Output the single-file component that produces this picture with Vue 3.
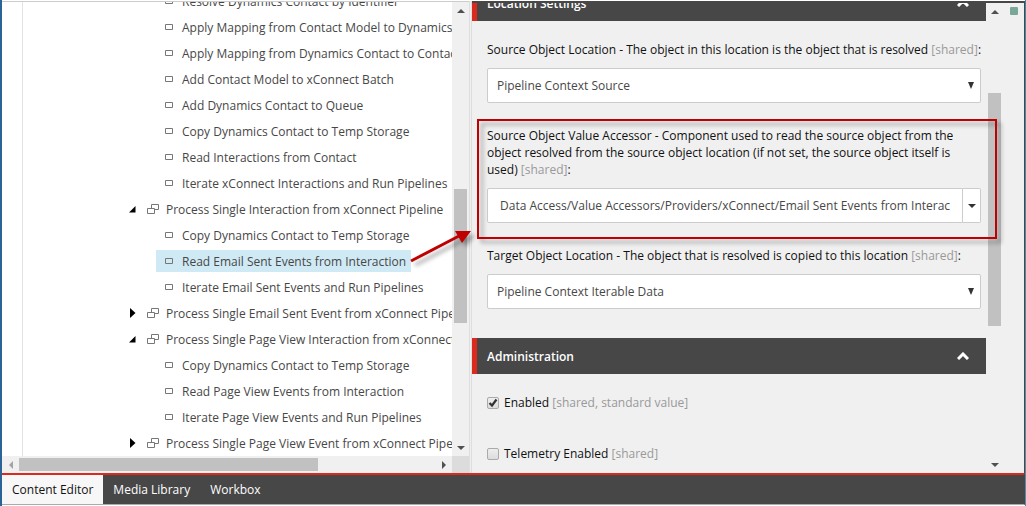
<script setup>
import { ref } from 'vue'

const rows = [
  { text: 'Resolve Dynamics Contact by Identifier', level: 2 },
  { text: 'Apply Mapping from Contact Model to Dynamics Contact', level: 2 },
  { text: 'Apply Mapping from Dynamics Contact to Contact Model', level: 2 },
  { text: 'Add Contact Model to xConnect Batch', level: 2 },
  { text: 'Add Dynamics Contact to Queue', level: 2 },
  { text: 'Copy Dynamics Contact to Temp Storage', level: 2 },
  { text: 'Read Interactions from Contact', level: 2 },
  { text: 'Iterate xConnect Interactions and Run Pipelines', level: 2 },
  { text: 'Process Single Interaction from xConnect Pipeline', level: 1, open: true },
  { text: 'Copy Dynamics Contact to Temp Storage', level: 2 },
  { text: 'Read Email Sent Events from Interaction', level: 2, selected: true },
  { text: 'Iterate Email Sent Events and Run Pipelines', level: 2 },
  { text: 'Process Single Email Sent Event from xConnect Pipeline', level: 1, open: false },
  { text: 'Process Single Page View Interaction from xConnect Pipeline', level: 1, open: true },
  { text: 'Copy Dynamics Contact to Temp Storage', level: 2 },
  { text: 'Read Page View Events from Interaction', level: 2 },
  { text: 'Iterate Page View Events and Run Pipelines', level: 2 },
  { text: 'Process Single Page View Event from xConnect Pipeline', level: 1, open: false },
]

const tabs = ['Content Editor', 'Media Library', 'Workbox']
const active = ref('Content Editor')
const accessor = ref('Data Access/Value Accessors/Providers/xConnect/Email Sent Events from Interaction')
const enabled = ref(true)
const telemetry = ref(false)

const treeScroll = [170, 134, 116]
const treeScrollX = [0, 299, 117]
const editorScroll = [73, 233, 130]
</script>

<template>
  <div class="window">
    <main class="main">
      <section class="tree-pane">
        <div class="tree-view">
          <ul class="tree">
            <li v-for="(row, i) in rows" :key="i" :class="['row', 'level-' + row.level]">
              <button v-if="row.level === 1" class="toggle" type="button" aria-label="Toggle">
                <svg width="8" height="10" viewBox="0 0 8 10">
                  <path v-if="row.open" d="M6.5 2V8.5H0z" fill="#000" />
                  <path v-else d="M1 0L6.5 5L1 10z" fill="#000" />
                </svg>
              </button>
              <a href="#" :class="['node', { selected: row.selected }]" @click.prevent>
                <svg v-if="row.level === 1" width="12" height="10" viewBox="0 0 12 10" fill="none" stroke="#777">
                  <path d="M.5 4.500h7v5h-7z M4.500 4.500v-4h7v5h-4" />
                </svg>
                <svg v-else width="8" height="6" viewBox="0 0 8 6" fill="none" stroke="#777">
                  <path d="M.5 .5h7v5h-7z" />
                </svg>
                <span>{{ row.text }}</span>
              </a>
            </li>
          </ul>
        </div>
        <div class="bar vertical" aria-hidden="true">
          <span class="cap"><svg width="8" height="4"><path d="M4 0L8 4H0z" fill="#505050" /></svg></span>
          <i :style="{ flexGrow: treeScroll[0] }"></i>
          <i class="thumb" :style="{ flexGrow: treeScroll[1] }"></i>
          <i :style="{ flexGrow: treeScroll[2] }"></i>
          <span class="cap"><svg width="8" height="4"><path d="M0 0H8L4 4z" fill="#505050" /></svg></span>
        </div>
        <div class="bar horizontal" aria-hidden="true">
          <span class="cap"><svg width="4" height="8"><path d="M4 0V8L0 4z" fill="#a3a3a3" /></svg></span>
          <i :style="{ flexGrow: treeScrollX[0] }"></i>
          <i class="thumb" :style="{ flexGrow: treeScrollX[1] }"></i>
          <i :style="{ flexGrow: treeScrollX[2] }"></i>
          <span class="cap"><svg width="4" height="8"><path d="M0 0L4 4L0 8z" fill="#505050" /></svg></span>
        </div>
        <div class="corner"></div>
      </section>

      <div class="splitter"></div>

      <section class="editor-pane">
        <form class="editor" @submit.prevent>
          <h2 class="heading first">
            <span>Location Settings</span>
            <svg width="12" height="8" viewBox="0 0 12 8" fill="none" stroke="#fff" stroke-width="3"><path d="M1 7L6 2L11 7" /></svg>
          </h2>
          <div class="fields">
            <div class="field">
              <label for="source">Source Object Location - The object in this location is the object that is resolved <em>[shared]</em>:</label>
              <div class="select">
                <select id="source"><option>Pipeline Context Source</option></select>
                <svg width="6" height="7"><path d="M0 0H6L3 7z" fill="#333" /></svg>
              </div>
            </div>
            <div class="field">
              <label for="accessor">Source Object Value Accessor - Component used to read the source object from the object resolved from the source object location (if not set, the source object itself is used) <em>[shared]</em>:</label>
              <div class="combo">
                <input id="accessor" v-model="accessor" type="text">
                <button type="button" aria-label="Open"><svg width="8" height="4"><path d="M0 0H8L4 4z" fill="#333" /></svg></button>
              </div>
            </div>
            <div class="field">
              <label for="target">Target Object Location - The object that is resolved is copied to this location <em>[shared]</em>:</label>
              <div class="select">
                <select id="target"><option>Pipeline Context Iterable Data</option></select>
                <svg width="6" height="7"><path d="M0 0H6L3 7z" fill="#333" /></svg>
              </div>
            </div>
          </div>
          <h2 class="heading">
            <span>Administration</span>
            <svg width="12" height="8" viewBox="0 0 12 8" fill="none" stroke="#fff" stroke-width="3"><path d="M1 7L6 2L11 7" /></svg>
          </h2>
          <div class="checks">
            <label><input v-model="enabled" type="checkbox"><span>Enabled <em>[shared, standard value]</em></span></label>
            <label><input v-model="telemetry" type="checkbox"><span>Telemetry Enabled <em>[shared]</em></span></label>
          </div>
        </form>
        <div class="bar vertical" aria-hidden="true">
          <span class="cap"><svg width="8" height="4"><path d="M4 0L8 4H0z" fill="#505050" /></svg></span>
          <i :style="{ flexGrow: editorScroll[0] }"></i>
          <i class="thumb" :style="{ flexGrow: editorScroll[1] }"></i>
          <i :style="{ flexGrow: editorScroll[2] }"></i>
          <span class="cap"><svg width="8" height="4"><path d="M0 0H8L4 4z" fill="#505050" /></svg></span>
        </div>
        <aside class="strip"><span></span></aside>
      </section>

      <div class="callout"></div>
      <svg class="arrow" width="70" height="50" viewBox="0 0 70 50">
        <path d="M5 34L53 9" stroke="#c00000" stroke-width="3" />
        <path d="M65 4L49 4L56 16z" fill="#c00000" />
      </svg>
    </main>
    <nav class="tabs">
      <button v-for="t in tabs" :key="t" type="button" :class="{ active: t === active }" @click="active = t">{{ t }}</button>
    </nav>
  </div>
</template>

<style>
html, body { background: #fff; }
body { overflow: hidden; }
</style>

<style scoped>
* { box-sizing: border-box; }
.window {
  display: flex;
  flex-direction: column;
  height: 100vh;
  padding: 1px 1px 1px 0;
  border-left: 2px solid #2a6496;
  background: linear-gradient(#3d88a8, #5d8b9f) right / 1px 100% no-repeat #fff;
  font: 12px/17px "Open Sans", "Noto Sans", sans-serif;
  color: #474747;
}
button, input, select { font: inherit; color: inherit; margin: 0; }
button { padding: 0; border: 0; background: none; }
svg { display: block; flex: none; }
em { font-style: normal; color: #999; }

.main {
  position: relative;
  display: flex;
  flex: 1;
  min-height: 0;
  border-right: 1px solid #474747;
}
.tree-pane {
  display: grid;
  grid-template: minmax(0, 1fr) 17px / minmax(0, 1fr) 17px;
  width: 467px;
  border-top: 1px solid #ccc;
}
.tree-view { overflow: hidden; padding-left: 20px; }
.tree {
  display: flex;
  flex-direction: column;
  gap: 4px;
  height: 100%;
  margin: 0;
  padding: 0;
  list-style: none;
  border-left: 1px solid #e3e3e3;
}
.row { display: flex; flex: none; height: 22px; align-items: center; white-space: nowrap; }
.row:first-child { margin-top: -12px; }
.level-1 { padding-left: 106px; }
.level-2 { padding-left: 133px; }
.toggle { width: 8px; margin-right: 5px; }
.node {
  display: flex;
  align-items: center;
  gap: 9px;
  height: 22px;
  padding: 0 5px 0 9px;
  color: inherit;
  text-decoration: none;
}
.level-1 .node { gap: 7px; padding-left: 5px; }
.selected { background: #d0eaf5; }

.bar { display: flex; background: #f0f0f0; }
.vertical { flex-direction: column; width: 17px; }
.cap { display: flex; flex: none; width: 17px; height: 17px; align-items: center; justify-content: center; }
.bar i { flex-basis: 0; }
.thumb { background: #c1c1c1; }
.vertical .thumb { margin: 0 2px; }
.horizontal .thumb { margin: 2px 0; }
.corner { background: #dcdcdc; }
.splitter { width: 3px; background: #efefef; border-right: 1px solid #dedede; border-left: 1px solid #dedede; }

.editor-pane {
  display: flex;
  flex: 1;
  min-width: 0;
  border-top: 2px solid #474747;
  background: #f0f0f0;
}
.editor { flex: 1; min-width: 0; overflow: hidden; color: #111; }
.heading {
  display: flex;
  align-items: center;
  justify-content: space-between;
  height: 36px;
  margin: 0;
  padding: 0 17px 0 10px;
  border-left: 5px solid #dc291e;
  background: #474747;
  color: #fff;
  font-size: 12px;
  font-weight: 600;
}
.first { margin-top: -18px; }
.fields {
  display: flex;
  flex-direction: column;
  gap: 24px;
  padding: 20px 5px 29px 15px;
}
.field { display: flex; flex-direction: column; gap: 10px; }
.field label { margin-right: -1px; }
.select { position: relative; }
.select svg { position: absolute; right: 7px; top: 14px; pointer-events: none; }
select {
  display: block;
  width: 100%;
  height: 35px;
  padding: 0 24px 0 9px;
  appearance: none;
  border: 1px solid #ccc;
  border-radius: 2px;
  background: #fff;
  color: #474747;
}
.combo { display: flex; height: 35px; color: #474747; }
.combo input {
  flex: 1;
  min-width: 0;
  padding: 0 12px;
  border: 1px solid #ccc;
  border-radius: 2px 0 0 2px;
  background: #fff;
}
.combo button {
  display: flex;
  align-items: center;
  justify-content: center;
  width: 18px;
  border: 1px solid #ccc;
  border-left: 0;
  border-radius: 0 2px 2px 0;
  background: #fff;
}
.checks { display: flex; flex-direction: column; gap: 34px; padding: 20px 15px; }
.checks label { display: flex; align-items: center; gap: 5px; }
.checks input {
  width: 12px;
  height: 12px;
  margin: 0;
  appearance: none;
  border: 1px solid #aaa;
  border-radius: 2px;
  background: linear-gradient(#eee, #dcdcdc);
}
.checks input:checked {
  background: url("data:image/svg+xml,%3Csvg xmlns='http://www.w3.org/2000/svg' viewBox='0 0 10 10'%3E%3Cpath d='M1.500 5L4 7.500L8.500 1.500' fill='none' stroke='%23333' stroke-width='2.200'/%3E%3C/svg%3E"), linear-gradient(#eee, #dcdcdc);
}
.strip { width: 21px; padding: 4px 0 0 7px; }
.strip span { display: block; width: 8px; height: 8px; background: #7aa897; border-radius: 1px; }

.callout {
  position: absolute;
  top: 118px;
  left: 475px;
  right: 27px;
  height: 120px;
  border: 2px solid #c00000;
  filter: drop-shadow(4px 4px 2px rgba(0, 0, 0, 0.35));
  pointer-events: none;
}
.arrow {
  position: absolute;
  top: 226px;
  left: 404px;
  overflow: visible;
  filter: drop-shadow(4px 4px 2px rgba(0, 0, 0, 0.35));
  pointer-events: none;
}
.tabs {
  display: flex;
  height: 32px;
  border-top: 2px solid #dc291e;
  border-bottom: 1px solid #ababab;
  border-right: 1px solid #474747;
  background: #474747;
}
.tabs button { padding: 0 10px; color: #fff; }
.tabs .active { background: #f7f7f7; color: #111; }
</style>
